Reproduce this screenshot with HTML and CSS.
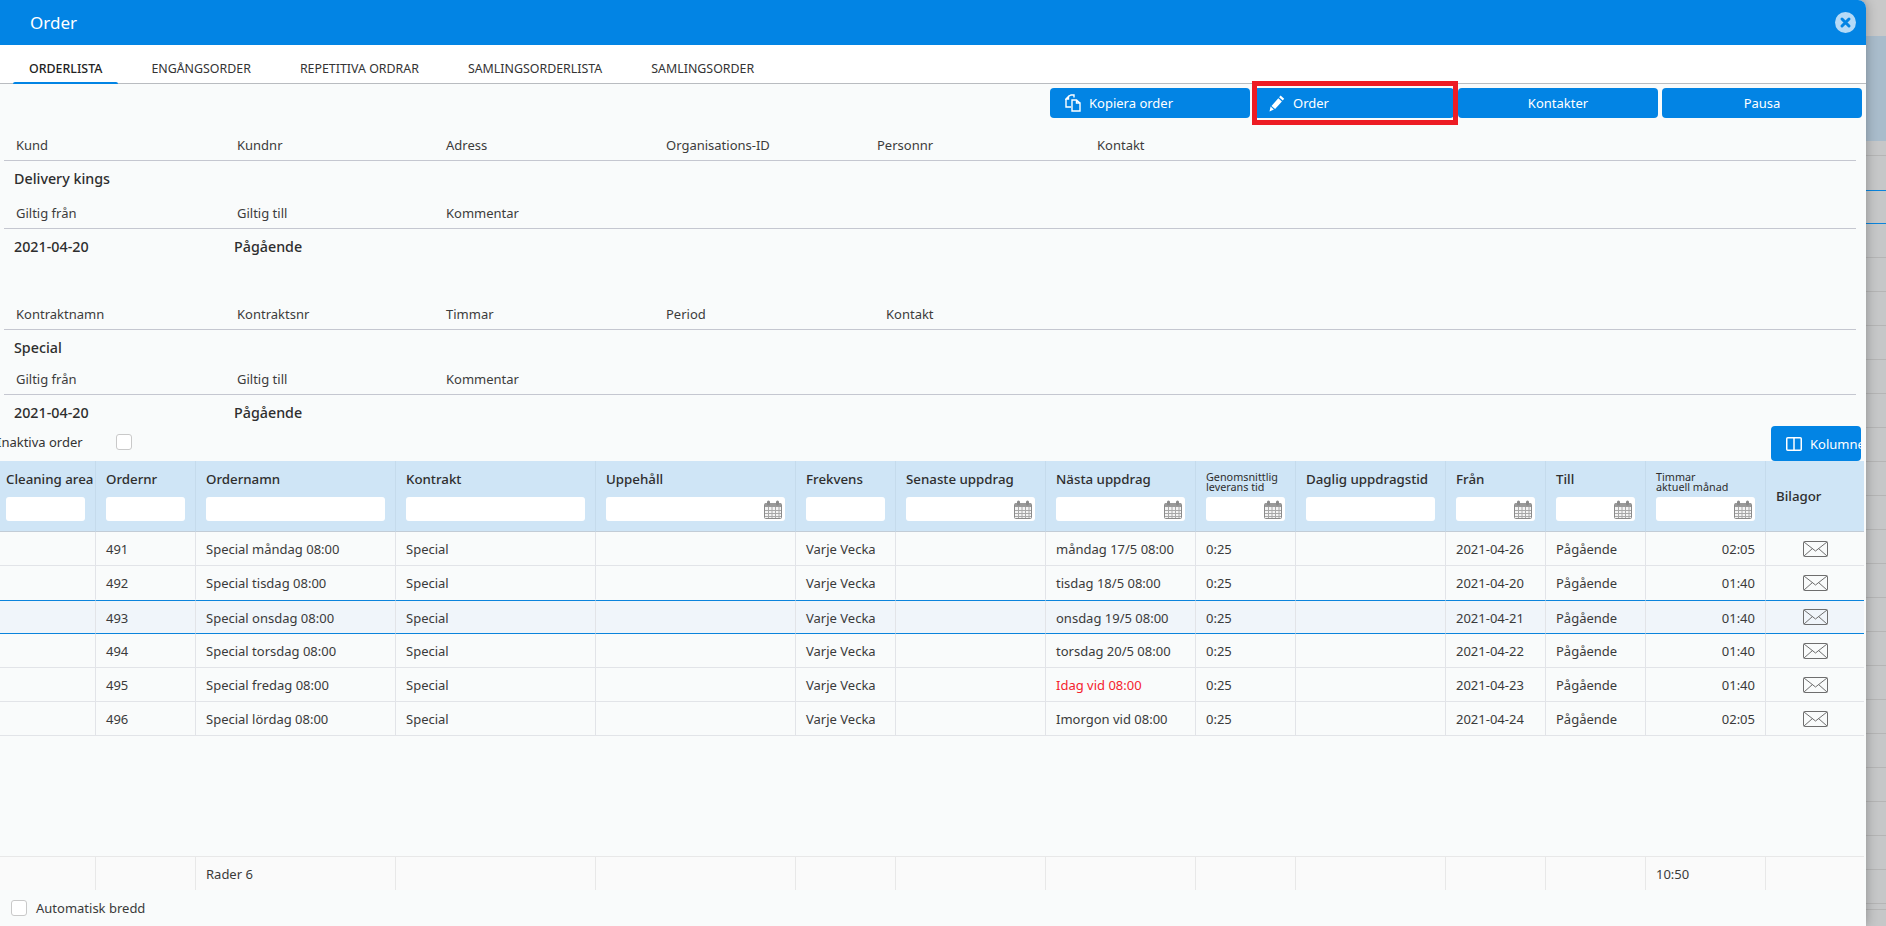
FILE: index.html
```html
<!DOCTYPE html>
<html lang="sv">
  <head>
    <meta charset="UTF-8" />
    <meta name="viewport" content="width=device-width, initial-scale=1.0" />
    <title>Order</title>
    <link rel="stylesheet" href="styles.css">
  </head>
  <body>
    <svg class="sprites" width="0" height="0" aria-hidden="true">
      <symbol id="icon-calendar" viewBox="0 0 18 19">
        <rect x="0.5" y="3.5" width="17" height="15" rx="1" fill="#f4f4f4" stroke="#8a8a8a" />
        <rect x="1" y="3" width="16" height="4" fill="#9a9a9a" />
        <rect x="3" y="0.5" width="3" height="5" rx="1.5" fill="#8a8a8a" />
        <rect x="12" y="0.5" width="3" height="5" rx="1.5" fill="#8a8a8a" />
        <path d="M1 10.5h16M1 13.5h16M1 16.5h16M4.5 7v11M8 7v11M11.5 7v11M15 7v11" stroke="#a8a8a8" fill="none" />
      </symbol>
      <symbol id="icon-mail" viewBox="0 0 25 16">
        <rect x="0.5" y="0.5" width="24" height="15" rx="1" fill="none" stroke="#6e6e6e" />
        <path d="M1 1l11.5 9L24 1M1 15l8.5-7.5M24 15l-8.5-7.5" fill="none" stroke="#6e6e6e" />
      </symbol>
    </svg>

    <div class="modal">
      <header class="modal-header">
        <span class="modal-title">Order</span>
        <svg class="close-icon" width="21" height="21" viewBox="0 0 21 21">
          <circle cx="10.5" cy="10.5" r="10.5" fill="#b5daf7" />
          <path d="M7 7l7 7M14 7l-7 7" stroke="#0284e4" stroke-width="3" stroke-linecap="round" />
        </svg>
      </header>

      <nav class="tabs">
        <a class="tab active">ORDERLISTA</a>
        <a class="tab">ENGÅNGSORDER</a>
        <a class="tab">REPETITIVA ORDRAR</a>
        <a class="tab">SAMLINGSORDERLISTA</a>
        <a class="tab">SAMLINGSORDER</a>
      </nav>

      <div class="toolbar">
        <button class="btn btn-left">
          <svg width="18" height="18" viewBox="0 0 18 18" fill="none" stroke="#fff" stroke-width="1.4">
            <path d="M3.5 2.5L6 1h3v2.5M1 5l2.5-2.5V5zM1 5v8h5" />
            <path d="M7 6h4.5v3H15v8H7zM11.5 6L15 9" />
          </svg>
          Kopiera order
        </button>
        <span class="highlighted">
          <button class="btn btn-left btn-order">
            <svg width="16" height="17" viewBox="0 0 16 17" fill="#fff">
              <path d="M11.6 0.6l3.6 3.2-1.5 1.7-3.6-3.2zM9.3 3.2l3.6 3.2-6.8 7.7-3.6-3.2zM1.6 11.6l3.3 3-4.4 1.9z" />
            </svg>
            Order
          </button>
        </span>
        <button class="btn">Kontakter</button>
        <button class="btn">Pausa</button>
      </div>

      <section class="info">
        <div class="info-row labels">
          <span>Kund</span><span>Kundnr</span><span>Adress</span><span>Organisations-ID</span><span>Personnr</span><span>Kontakt</span>
        </div>
        <div class="info-row values first"><span>Delivery kings</span></div>
        <div class="info-row labels">
          <span>Giltig från</span><span>Giltig till</span><span>Kommentar</span>
        </div>
        <div class="info-row values"><span>2021-04-20</span><span>Pågående</span></div>

        <div class="info-row labels contract">
          <span>Kontraktnamn</span><span>Kontraktsnr</span><span>Timmar</span><span>Period</span><span>Kontakt</span>
        </div>
        <div class="info-row values short"><span>Special</span></div>
        <div class="info-row labels">
          <span>Giltig från</span><span>Giltig till</span><span>Kommentar</span>
        </div>
        <div class="info-row values"><span>2021-04-20</span><span>Pågående</span></div>
      </section>

      <div class="table-tools">
        <span class="inactive-label">Inaktiva order</span>
        <span class="checkbox"></span>
        <button class="btn btn-columns">
          <svg width="16" height="14" viewBox="0 0 16 14" fill="none" stroke="#fff" stroke-width="1.5">
            <rect x="0.75" y="0.75" width="14.5" height="12.5" rx="1" />
            <path d="M8 1v12" />
          </svg>
          Kolumner
        </button>
      </div>

      <div class="grid-body">
        <table class="grid">
          <colgroup>
            <col class="w100" /><col class="w100" /><col class="w200" /><col class="w200" /><col class="w200" /><col class="w100" /><col class="w150" /><col class="w150" /><col class="w100" /><col class="w150" /><col class="w100" /><col class="w100" /><col class="w120" /><col class="w100" />
          </colgroup>
          <thead>
            <tr>
              <th><div class="th-title">Cleaning area</div><div class="filter"><input /></div></th>
              <th><div class="th-title">Ordernr</div><div class="filter"><input /></div></th>
              <th><div class="th-title">Ordernamn</div><div class="filter"><input /></div></th>
              <th><div class="th-title">Kontrakt</div><div class="filter"><input /></div></th>
              <th><div class="th-title">Uppehåll</div><div class="filter"><input /><svg class="cal"><use href="#icon-calendar" /></svg></div></th>
              <th><div class="th-title">Frekvens</div><div class="filter"><input /></div></th>
              <th><div class="th-title">Senaste uppdrag</div><div class="filter"><input /><svg class="cal"><use href="#icon-calendar" /></svg></div></th>
              <th><div class="th-title">Nästa uppdrag</div><div class="filter"><input /><svg class="cal"><use href="#icon-calendar" /></svg></div></th>
              <th><div class="th-title small">Genomsnittlig<br />leverans tid</div><div class="filter"><input /><svg class="cal"><use href="#icon-calendar" /></svg></div></th>
              <th><div class="th-title">Daglig uppdragstid</div><div class="filter"><input /></div></th>
              <th><div class="th-title">Från</div><div class="filter"><input /><svg class="cal"><use href="#icon-calendar" /></svg></div></th>
              <th><div class="th-title">Till</div><div class="filter"><input /><svg class="cal"><use href="#icon-calendar" /></svg></div></th>
              <th><div class="th-title small">Timmar<br />aktuell månad</div><div class="filter"><input /><svg class="cal"><use href="#icon-calendar" /></svg></div></th>
              <th class="th-middle">Bilagor</th>
            </tr>
          </thead>
          <tbody>
            <tr>
              <td></td><td>491</td><td>Special måndag 08:00</td><td>Special</td><td></td><td>Varje Vecka</td><td></td><td>måndag 17/5 08:00</td><td>0:25</td><td></td><td>2021-04-26</td><td>Pågående</td><td class="num">02:05</td>
              <td class="attach"><svg class="mail"><use href="#icon-mail" /></svg></td>
            </tr>
            <tr>
              <td></td><td>492</td><td>Special tisdag 08:00</td><td>Special</td><td></td><td>Varje Vecka</td><td></td><td>tisdag 18/5 08:00</td><td>0:25</td><td></td><td>2021-04-20</td><td>Pågående</td><td class="num">01:40</td>
              <td class="attach"><svg class="mail"><use href="#icon-mail" /></svg></td>
            </tr>
            <tr class="selected">
              <td></td><td>493</td><td>Special onsdag 08:00</td><td>Special</td><td></td><td>Varje Vecka</td><td></td><td>onsdag 19/5 08:00</td><td>0:25</td><td></td><td>2021-04-21</td><td>Pågående</td><td class="num">01:40</td>
              <td class="attach"><svg class="mail"><use href="#icon-mail" /></svg></td>
            </tr>
            <tr>
              <td></td><td>494</td><td>Special torsdag 08:00</td><td>Special</td><td></td><td>Varje Vecka</td><td></td><td>torsdag 20/5 08:00</td><td>0:25</td><td></td><td>2021-04-22</td><td>Pågående</td><td class="num">01:40</td>
              <td class="attach"><svg class="mail"><use href="#icon-mail" /></svg></td>
            </tr>
            <tr>
              <td></td><td>495</td><td>Special fredag 08:00</td><td>Special</td><td></td><td>Varje Vecka</td><td></td><td class="due">Idag vid 08:00</td><td>0:25</td><td></td><td>2021-04-23</td><td>Pågående</td><td class="num">01:40</td>
              <td class="attach"><svg class="mail"><use href="#icon-mail" /></svg></td>
            </tr>
            <tr>
              <td></td><td>496</td><td>Special lördag 08:00</td><td>Special</td><td></td><td>Varje Vecka</td><td></td><td>Imorgon vid 08:00</td><td>0:25</td><td></td><td>2021-04-24</td><td>Pågående</td><td class="num">02:05</td>
              <td class="attach"><svg class="mail"><use href="#icon-mail" /></svg></td>
            </tr>
          </tbody>
        </table>
      </div>

      <div class="grid-foot">
        <table class="grid totals">
          <colgroup>
            <col class="w100" /><col class="w100" /><col class="w200" /><col class="w200" /><col class="w200" /><col class="w100" /><col class="w150" /><col class="w150" /><col class="w100" /><col class="w150" /><col class="w100" /><col class="w100" /><col class="w120" /><col class="w100" />
          </colgroup>
          <tr>
            <td></td><td></td><td>Rader 6</td><td></td><td></td><td></td><td></td><td></td><td></td><td></td><td></td><td></td><td>10:50</td><td></td>
          </tr>
        </table>
      </div>

      <div class="auto-width">
        <span class="checkbox"></span>
        <span>Automatisk bredd</span>
      </div>
    </div>

    <!-- the page behind the dialog -->
    <div class="backdrop">
      <div class="bg-top"></div>
      <div class="bg-head"></div>
      <div class="bg-sub"></div>
      <div class="bg-row"></div>
      <div class="bg-row-sel"></div>
      <div class="bg-rows"></div>
      <div class="bg-last"></div>
    </div>
  </body>
</html>
```

FILE: styles.css
```css
* {
  box-sizing: border-box;
}

html,
body {
  height: 100%;
}

body {
  display: flex;
  margin: 0;
  overflow: hidden;
  background-color: #c6c7c8;
  font-family: 'Noto Sans', Arial, sans-serif;
  font-size: 13px;
  color: #333;
}

.sprites {
  display: block;
  position: absolute;
}

.modal {
  position: relative;
  z-index: 1;
  width: 1866px;
  height: 926px;
  flex: none;
  overflow: hidden;
  background-color: #f9fbfb;
  border-top-right-radius: 8px;
  box-shadow: 0 0 12px rgba(0, 0, 0, 0.3);
}

.modal-header {
  display: flex;
  align-items: center;
  justify-content: space-between;
  height: 45px;
  padding: 0 10px 0 30px;
  background-color: #0284e4;
}

.modal-title {
  font-size: 17px;
  color: #fff;
}

.tabs {
  display: flex;
  height: 39px;
  padding-left: 13px;
  background-color: #fff;
  border-bottom: 1px solid #b9bcc0;
}

.tab {
  position: relative;
  padding: 15px 16px 0;
  margin-right: 17px;
  font-size: 12.4px;
  line-height: 17px;
  color: #333;
}

.tab.active {
  font-weight: 500;
  color: #222;
}

.tab.active::after {
  content: '';
  position: absolute;
  left: 0;
  right: 0;
  bottom: -1px;
  height: 2px;
  background-color: #0284e4;
  border-radius: 2px 2px 0 0;
}

.toolbar {
  display: flex;
  justify-content: flex-end;
  gap: 4px;
  padding: 4px 4px 0 0;
  height: 46px;
}

.btn {
  display: flex;
  align-items: center;
  justify-content: center;
  gap: 6px;
  width: 200px;
  height: 30px;
  padding: 0;
  font-family: inherit;
  font-size: 13px;
  color: #fff;
  background-color: #0284e4;
  border: 0;
  border-radius: 4px;
}

.btn svg {
  flex: none;
}

.btn-left {
  justify-content: flex-start;
  padding-left: 15px;
}

.btn-order {
  gap: 8px;
}

.highlighted {
  position: relative;
  display: block;
  height: 30px;
}

/* the red marker drawn on top of the screenshot */
.highlighted::after {
  content: '';
  position: absolute;
  top: -7px;
  right: -4px;
  bottom: -7px;
  left: -2px;
  border: 5px solid #ed1c24;
}

.info-row {
  display: grid;
  grid-template-columns: 221px 209px 220px 211px 220px 1fr;
  align-items: center;
}

.labels {
  height: 31px;
  margin: 0 10px 0 4px;
  padding-left: 12px;
  padding-bottom: 1px;
  color: #3c3c3c;
  border-bottom: 1px solid #c5c7d0;
}

.labels.contract {
  grid-template-columns: 221px 209px 220px 220px 1fr;
  margin-top: 35px;
}

.values {
  grid-template-columns: 220px 1fr;
  height: 35px;
  padding-left: 14px;
  font-size: 14.3px;
  font-weight: 500;
  color: #2e2e2e;
}

.values.first {
  height: 37px;
  padding-bottom: 3px;
}

.values.short {
  height: 34px;
}

.table-tools {
  display: flex;
  align-items: flex-start;
  height: 35px;
  margin-top: -4px;
  padding-right: 5px;
}

.inactive-label {
  width: 119px;
  margin-left: -3px;
  margin-top: 7px;
  line-height: 18px;
}

.checkbox {
  display: block;
  width: 16px;
  height: 16px;
  flex: none;
  background-color: #fff;
  border: 1px solid #c9c9c9;
  border-radius: 3px;
}

.table-tools .checkbox {
  margin-top: 8px;
}

.btn-columns {
  justify-content: flex-start;
  gap: 8px;
  width: 90px;
  height: 35px;
  margin-left: auto;
  padding-left: 15px;
  overflow: hidden;
  white-space: nowrap;
}

.grid-body {
  height: 395px;
  margin-right: 2px;
  overflow: hidden;
}

.grid-foot {
  margin-right: 2px;
  overflow: hidden;
}

.grid {
  width: 1870px;
  margin-left: -4px;
  table-layout: fixed;
  border-collapse: separate;
  border-spacing: 0;
}

.w100 { width: 100px; }
.w120 { width: 120px; }
.w150 { width: 150px; }
.w200 { width: 200px; }

.grid th {
  padding: 9px 10px 10px;
  text-align: left;
  font-size: 13.3px;
  font-weight: 500;
  color: #2e2e2e;
  background-color: #cfe5f6;
  border-right: 1px solid #c5dbec;
  border-bottom: 1px solid #c2ccd6;
  vertical-align: top;
}

.grid th.th-middle {
  vertical-align: middle;
  padding-top: 0;
  padding-bottom: 0;
}

.th-title {
  height: 27px;
  line-height: 18px;
  white-space: nowrap;
}

.th-title.small {
  padding-top: 2px;
  font-size: 10.8px;
  font-weight: 400;
  line-height: 10px;
}

.filter {
  display: flex;
  align-items: center;
  height: 24px;
  padding-right: 3px;
  background-color: #fff;
  border-radius: 3px;
}

.filter input {
  flex: 1;
  width: 0;
  min-width: 0;
  height: 100%;
  padding: 0;
  border: 0;
  outline: 0;
  background: transparent;
}

.cal {
  display: block;
  width: 18px;
  height: 19px;
  flex: none;
}

.grid td {
  height: 34px;
  padding: 1px 10px 0;
  white-space: nowrap;
  color: #3a3a3a;
  border-right: 1px solid #e2e4e8;
  border-bottom: 1px solid #e2e4e8;
}

.grid tr:has(+ .selected) td {
  border-bottom-color: transparent;
}

.grid .selected td {
  background-color: #f0f5fa;
  border-top: 1px solid #0b84dc;
  border-bottom: 1px solid #0b84dc;
}

.grid td.num {
  text-align: right;
}

.grid td.due {
  color: #f5222d;
}

.grid td.attach {
  padding: 0;
  text-align: center;
}

.mail {
  display: block;
  width: 25px;
  height: 16px;
  margin: 0 auto;
}

.totals {
  background-color: #fafafa;
}

.totals td {
  border-top: 1px solid #e8e8e8;
  border-right-color: #e8e8e8;
  border-bottom: 0;
}

.auto-width {
  display: flex;
  align-items: center;
  gap: 9px;
  height: 36px;
  padding-left: 11px;
  color: #3a3a3a;
}

.backdrop {
  flex: 1;
  height: 926px;
}

.bg-top {
  height: 36px;
  background-color: #c9c9c9;
}

.bg-head {
  height: 105px;
  background-color: #a9bccb;
}

.bg-sub {
  height: 15px;
  border-bottom: 1px solid #b5b5b5;
}

.bg-row {
  height: 35px;
  border-bottom: 1px solid #0b84dc;
}

.bg-row-sel {
  height: 33px;
  border-bottom: 1px solid #0b84dc;
}

.bg-rows {
  height: 681px;
  background-image: repeating-linear-gradient(to bottom, transparent 0, transparent 33px, #b5b5b5 33px, #b5b5b5 34px);
}

.bg-last {
  height: 5px;
  border-bottom: 1px solid #b5b5b5;
}
```
